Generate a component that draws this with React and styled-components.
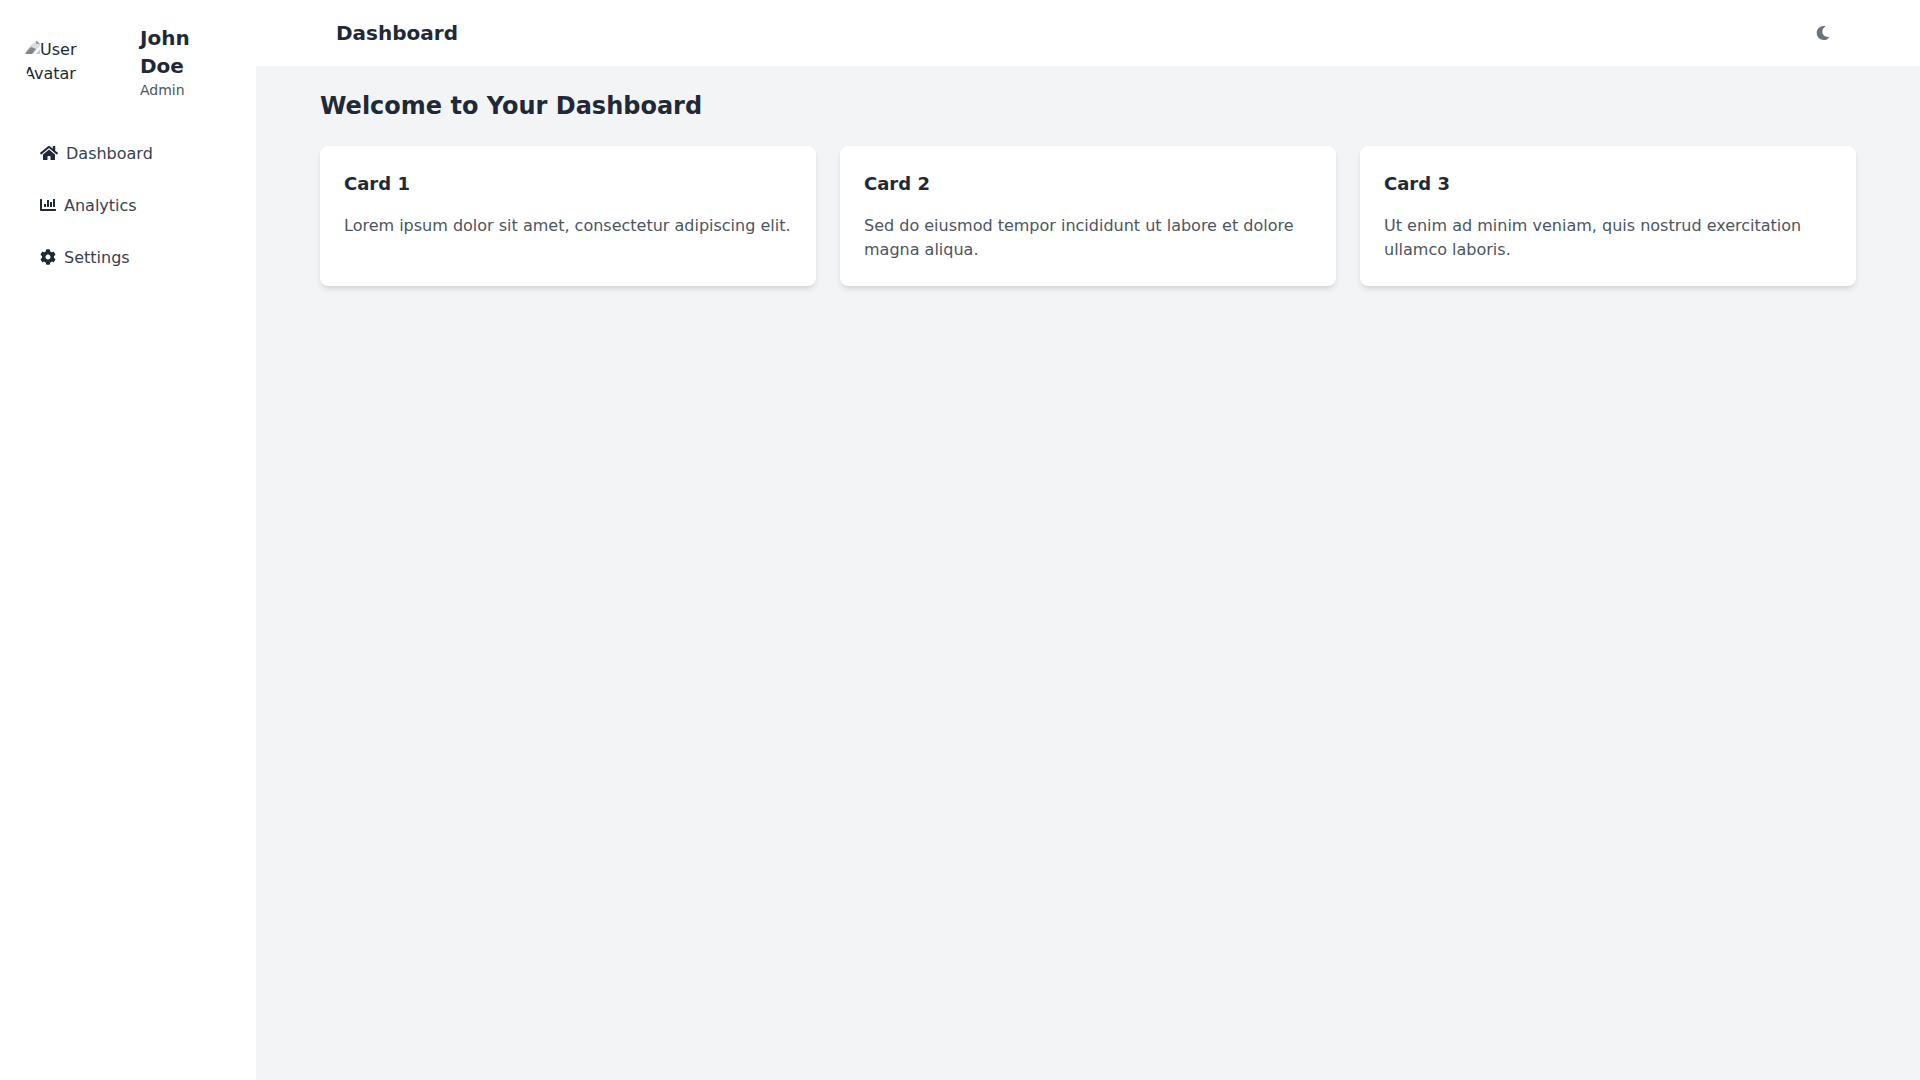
import React from "react";
import styled, { createGlobalStyle } from "styled-components";
import { FaHome, FaChartBar, FaCog, FaMoon } from "react-icons/fa";

const GlobalStyle = createGlobalStyle`
  *, *::before, *::after { box-sizing: border-box; }
  body {
    margin: 0;
    background: #f3f4f6;
    color: #1f2937;
    font-family: "DejaVu Sans", sans-serif;
    font-size: 16px;
    line-height: 24px;
  }
  h1, h2, h3, p, ul { margin: 0; padding: 0; }
`;

const Layout = styled.div`
  display: flex;
  min-height: 100vh;
`;

const Sidebar = styled.aside`
  flex: 0 0 256px;
  background: #ffffff;
`;

const Profile = styled.div`
  display: flex;
  align-items: center;
  gap: 16px;
  padding: 24px;
`;

const Avatar = styled.div`
  flex: 0 0 100px;
  border-radius: 24px;
  overflow: hidden;

  svg {
    width: 16px;
    height: 16px;
    vertical-align: baseline;
  }
`;

const Name = styled.h2`
  font-size: 20px;
  line-height: 28px;
  font-weight: 700;
`;

const Role = styled.p`
  font-size: 14px;
  line-height: 20px;
  color: #4b5563;
`;

const NavList = styled.ul`
  display: flex;
  flex-direction: column;
  gap: 8px;
  padding: 8px 24px;
  list-style: none;
`;

const NavLink = styled.a`
  display: flex;
  align-items: center;
  gap: 8px;
  padding: 10px 16px;
  color: #374151;
  text-decoration: none;

  svg {
    flex: none;
    width: ${(p) => (p.$wide ? "18px" : "16px")};
    height: 16px;
    margin-bottom: 2px;
    color: #1f2937;
  }
`;

const Main = styled.div`
  flex: 1;
  min-width: 0;
`;

const Container = styled.div`
  max-width: 1536px;
  margin: 0 auto;
`;

const Header = styled.header`
  background: #ffffff;
`;

const HeaderRow = styled(Container)`
  display: flex;
  align-items: center;
  justify-content: space-between;
  padding: 16px;
`;

const PageTitle = styled.h1`
  font-size: 20px;
  line-height: 28px;
  font-weight: 700;
`;

const ThemeButton = styled.button`
  display: flex;
  padding: 10px;
  border: 0;
  border-radius: 8px;
  background: transparent;
  color: #6b7280;
  font-size: 14px;
  cursor: pointer;
`;

const Content = styled(Container)`
  padding: 24px 0;
`;

const Welcome = styled.h2`
  margin-bottom: 24px;
  font-size: 24px;
  line-height: 32px;
  font-weight: 700;
`;

const CardGrid = styled.div`
  display: grid;
  grid-template-columns: repeat(3, minmax(0, 1fr));
  gap: 24px;
`;

const Card = styled.article`
  padding: 24px;
  border-radius: 8px;
  background: #ffffff;
  box-shadow: 0 4px 6px -1px rgba(0, 0, 0, 0.1), 0 2px 4px -2px rgba(0, 0, 0, 0.1);
`;

const CardTitle = styled.h3`
  margin-bottom: 16px;
  font-size: 18px;
  line-height: 28px;
  font-weight: 700;
`;

const CardText = styled.p`
  color: #4b5563;
`;

const links = [
  { label: "Dashboard", Icon: FaHome, wide: true },
  { label: "Analytics", Icon: FaChartBar },
  { label: "Settings", Icon: FaCog },
];

const cards = [
  { title: "Card 1", text: "Lorem ipsum dolor sit amet, consectetur adipiscing elit." },
  { title: "Card 2", text: "Sed do eiusmod tempor incididunt ut labore et dolore magna aliqua." },
  { title: "Card 3", text: "Ut enim ad minim veniam, quis nostrud exercitation ullamco laboris." },
];

function PictureIcon() {
  return (
    <svg viewBox="0 0 16 16" aria-hidden="true">
      <path d="M0 1h12l4 4v2L9 15H0z" fill="#dadce0" />
      <path d="M0 15l7-7 5 2-4 5z" fill="#80868b" />
      <path d="M12 1l4 4h-4z" fill="#9aa0a6" />
      <path d="M12 15l4-5v5z" fill="#c4c7d0" />
    </svg>
  );
}

export default function App() {
  return (
    <>
      <GlobalStyle />
      <Layout>
        <Sidebar>
          <Profile>
            <Avatar>
              <PictureIcon />
              User Avatar
            </Avatar>
            <div>
              <Name>John Doe</Name>
              <Role>Admin</Role>
            </div>
          </Profile>
          <nav>
            <NavList>
              {links.map(({ label, Icon, wide }) => (
                <li key={label}>
                  <NavLink href="#" $wide={wide}>
                    <Icon aria-hidden="true" />
                    {label}
                  </NavLink>
                </li>
              ))}
            </NavList>
          </nav>
        </Sidebar>
        <Main>
          <Header>
            <HeaderRow>
              <PageTitle>Dashboard</PageTitle>
              <ThemeButton type="button" aria-label="Toggle dark mode">
                <FaMoon aria-hidden="true" />
              </ThemeButton>
            </HeaderRow>
          </Header>
          <Content as="main">
            <Welcome>Welcome to Your Dashboard</Welcome>
            <CardGrid>
              {cards.map((card) => (
                <Card key={card.title}>
                  <CardTitle>{card.title}</CardTitle>
                  <CardText>{card.text}</CardText>
                </Card>
              ))}
            </CardGrid>
          </Content>
        </Main>
      </Layout>
    </>
  );
}
